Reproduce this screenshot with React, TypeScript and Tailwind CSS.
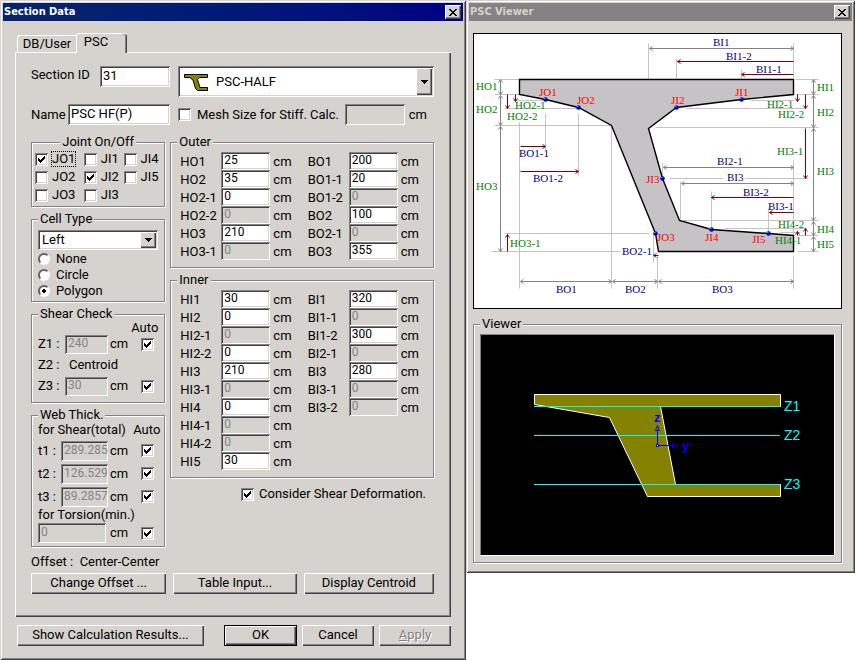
import type { ReactNode } from "react";
import clsx from "clsx";

const SUNKEN =
  "shadow-[inset_1px_1px_0_#848284,inset_-1px_-1px_0_#fff,inset_2px_2px_0_#424142,inset_-2px_-2px_0_#d6d3ce]";
const RAISED =
  "shadow-[inset_1px_1px_0_#fff,inset_-1px_-1px_0_#424142,inset_-2px_-2px_0_#848284]";
const WINDOW =
  "min-w-0 bg-[#d6d3ce] p-[3px] shadow-[inset_1px_1px_0_#d6d3ce,inset_-1px_-1px_0_#424142,inset_2px_2px_0_#fff,inset_-2px_-2px_0_#848284]";

type FieldData = { name: string; value: string; off?: boolean };

const OUTER: FieldData[][] = [
  [
    { name: "HO1", value: "25" },
    { name: "HO2", value: "35" },
    { name: "HO2-1", value: "0" },
    { name: "HO2-2", value: "0", off: true },
    { name: "HO3", value: "210" },
    { name: "HO3-1", value: "0", off: true },
  ],
  [
    { name: "BO1", value: "200" },
    { name: "BO1-1", value: "20" },
    { name: "BO1-2", value: "0", off: true },
    { name: "BO2", value: "100" },
    { name: "BO2-1", value: "0", off: true },
    { name: "BO3", value: "355" },
  ],
];

const INNER: FieldData[][] = [
  [
    { name: "HI1", value: "30" },
    { name: "HI2", value: "0" },
    { name: "HI2-1", value: "0", off: true },
    { name: "HI2-2", value: "0" },
    { name: "HI3", value: "210" },
    { name: "HI3-1", value: "0", off: true },
    { name: "HI4", value: "0" },
    { name: "HI4-1", value: "0", off: true },
    { name: "HI4-2", value: "0", off: true },
    { name: "HI5", value: "30" },
  ],
  [
    { name: "BI1", value: "320" },
    { name: "BI1-1", value: "0", off: true },
    { name: "BI1-2", value: "300" },
    { name: "BI2-1", value: "0", off: true },
    { name: "BI3", value: "280" },
    { name: "BI3-1", value: "0", off: true },
    { name: "BI3-2", value: "0", off: true },
  ],
];

const JOINTS = [
  { name: "JO1", on: true },
  { name: "JI1" },
  { name: "JI4" },
  { name: "JO2" },
  { name: "JI2", on: true },
  { name: "JI5" },
  { name: "JO3" },
  { name: "JI3" },
];

function TitleBar({ title, active }: { title: string; active?: boolean }) {
  return (
    <header
      className={clsx(
        "flex h-[18px] items-center justify-between pr-[2px] pl-px",
        active ? "bg-linear-to-r from-[#08246b] to-[#000084] text-white" : "bg-[#848284] text-[#d6d3ce]",
      )}
    >
      <h1 className="font-['DejaVu_Sans_Condensed','DejaVu_Sans',sans-serif] text-[11px] leading-4 font-bold">
        {title}
      </h1>
      <button aria-label="Close" className={clsx("flex h-[14px] w-4 items-center justify-center bg-[#d6d3ce]", RAISED)}>
        <svg width="8" height="7" viewBox="0 0 8 7" shapeRendering="crispEdges">
          <path
            d="M0 0h2v1h-2zM6 0h2v1h-2zM1 1h2v1h-2zM5 1h2v1h-2zM2 2h4v1h-4zM3 3h2v1h-2zM2 4h4v1h-4zM1 5h2v1h-2zM5 5h2v1h-2zM0 6h2v1h-2zM6 6h2v1h-2z"
            fill="#000"
          />
        </svg>
      </button>
    </header>
  );
}

function Group({ title, center, className, children }: { title: string; center?: boolean; className?: string; children: ReactNode }) {
  return (
    <fieldset
      className={clsx(
        "min-w-0 border border-[#848284] shadow-[1px_1px_0_#fff,inset_1px_1px_0_#fff]",
        className,
      )}
    >
      <legend className={clsx("h-4 bg-[#d6d3ce] px-[2px] leading-4", center ? "mx-auto" : "ml-[6px]")}>{title}</legend>
      {children}
    </fieldset>
  );
}

function TextBox({ id, label, value, off, className }: { id?: string; label?: string; value: string; off?: boolean; className?: string }) {
  return (
    <input
      id={id}
      aria-label={label}
      type="text"
      defaultValue={value}
      disabled={off}
      className={clsx(
        "min-w-0 pb-[2px] pl-[3px] outline-none",
        off ? "bg-[#d6d3ce] text-[#848284]" : "bg-white",
        SUNKEN,
        className,
      )}
    />
  );
}

function Tick({ id, label, checked }: { id?: string; label?: string; checked?: boolean }) {
  return (
    <span className="relative block size-[13px] shrink-0">
      <input
        id={id}
        aria-label={label}
        type="checkbox"
        defaultChecked={checked}
        className={clsx("peer block size-[13px] appearance-none bg-white outline-none", SUNKEN)}
      />
      <svg
        className="pointer-events-none absolute top-[3px] left-[3px] hidden peer-checked:block"
        width="7"
        height="7"
        viewBox="0 0 7 7"
        shapeRendering="crispEdges"
      >
        <path d="M0 2h1v3h-1zM1 3h1v3h-1zM2 4h1v3h-1zM3 3h1v3h-1zM4 2h1v3h-1zM5 1h1v3h-1zM6 0h1v3h-1z" />
      </svg>
    </span>
  );
}

function DropArrow() {
  return (
    <span
      className={clsx(
        "pointer-events-none absolute inset-y-[2px] right-[2px] flex w-4 items-center justify-center bg-[#d6d3ce]",
        RAISED,
      )}
    >
      <svg width="7" height="4" viewBox="0 0 7 4" shapeRendering="crispEdges">
        <path d="M0 0h7v1h-7zM1 1h5v1h-5zM2 2h3v1h-3zM3 3h1v1h-1z" />
      </svg>
    </span>
  );
}

function PushButton({ children, className, disabled }: { children: ReactNode; className?: string; disabled?: boolean }) {
  return (
    <button
      disabled={disabled}
      className={clsx(
        "h-[21px] pb-[2px] text-center leading-4 whitespace-nowrap",
        disabled && "text-[#848284] [text-shadow:1px_1px_0_#fff]",
        RAISED,
        className,
      )}
    >
      {children}
    </button>
  );
}

function FieldColumn({ fields }: { fields: FieldData[] }) {
  return (
    <div>
      {fields.map((f) => (
        <div key={f.name} className="flex h-[18px] items-center">
          <label htmlFor={f.name} className="w-[41px] pt-px leading-4">
            {f.name}
          </label>
          <TextBox id={f.name} value={f.value} off={f.off} className="h-[18px] w-[49px] text-xs" />
          <span className="ml-[3px] pt-[2px] leading-4">cm</span>
        </div>
      ))}
    </div>
  );
}

function DimensionGroup({ title, columns }: { title: string; columns: FieldData[][] }) {
  return (
    <Group title={title}>
      <div className="grid grid-cols-[127fr_125fr] pt-[2px] pb-[7px] pl-[9px]">
        {columns.map((fields) => (
          <FieldColumn key={fields[0].name} fields={fields} />
        ))}
      </div>
    </Group>
  );
}

function AutoRow({ label, children, className }: { label: string; children: ReactNode; className: string }) {
  return (
    <div className={clsx("flex items-center pr-[10px] pl-[6px]", className)}>
      {children}
      <span className="ml-[2px] flex-1 leading-4">cm</span>
      <Tick label={`${label} auto`} checked />
    </div>
  );
}

function JointGroup() {
  return (
    <Group title="Joint On/Off" center>
      <div className="grid grid-cols-[49fr_40fr_41fr] pb-[2px] pl-[3px]">
        {JOINTS.map((j) => (
          <div key={j.name} className="flex h-[18px] items-center gap-1">
            <Tick id={j.name} checked={j.on} />
            <label
              htmlFor={j.name}
              className={clsx("leading-[14px]", j.name === "JO1" && "outline-1 outline-black outline-dotted")}
            >
              {j.name}
            </label>
          </div>
        ))}
      </div>
    </Group>
  );
}

function CellTypeGroup() {
  return (
    <Group title="Cell Type">
      <div className="px-[6px] pt-[3px] pb-[2px]">
        <div className="relative mb-px">
          <select aria-label="Cell type side" className={clsx("block h-5 w-full appearance-none bg-white pb-px pl-1 outline-none", SUNKEN)}>
            <option>Left</option>
            <option>Right</option>
          </select>
          <DropArrow />
        </div>
        {["None", "Circle", "Polygon"].map((t) => (
          <label key={t} className="flex h-4 items-center gap-[6px] leading-4">
            <input
              type="radio"
              name="cell-type"
              defaultChecked={t === "Polygon"}
              className="size-3 appearance-none rounded-full border-2 border-t-[#636163] border-r-white border-b-white border-l-[#636163] bg-white checked:bg-[radial-gradient(circle,#000_2px,#fff_2px)]"
            />
            {t}
          </label>
        ))}
      </div>
    </Group>
  );
}

function ShearCheckGroup() {
  return (
    <Group title="Shear Check">
      <div className="h-3 pr-[6px] text-right leading-3">Auto</div>
      <div className="flex flex-col gap-px pb-[6px]">
        <AutoRow label="Z1" className="h-5">
          <label htmlFor="z1" className="w-[27px]">Z1 :</label>
          <TextBox id="z1" value="240" off className="h-[19px] w-[43px] text-xs" />
        </AutoRow>
        <div className="flex h-5 items-center pl-[6px]">
          <span className="w-[31px]">Z2 :</span>
          <span>Centroid</span>
        </div>
        <AutoRow label="Z3" className="h-5">
          <label htmlFor="z3" className="w-[27px]">Z3 :</label>
          <TextBox id="z3" value="30" off className="h-[19px] w-[43px] text-xs" />
        </AutoRow>
      </div>
    </Group>
  );
}

function WebThickGroup() {
  const rows = [
    ["t1", "289.285"],
    ["t2", "126.529"],
    ["t3", "89.2857"],
  ];
  return (
    <Group title="Web Thick.">
      <div className="flex h-4 justify-between pr-1 pl-[6px] leading-[14px] whitespace-nowrap">
        <span>for Shear(total)</span>
        <span>Auto</span>
      </div>
      {rows.map(([name, value]) => (
        <AutoRow key={name} label={name} className="h-[23px]">
          <label htmlFor={name} className="w-[23px]">{name} :</label>
          <TextBox id={name} value={value} off className="h-5 w-[47px] text-xs" />
        </AutoRow>
      ))}
      <label htmlFor="torsion" className="block h-[14px] pl-[6px] leading-[14px]">
        for Torsion(min.)
      </label>
      <AutoRow label="Torsion" className="mb-[2px] h-[22px]">
        <TextBox id="torsion" value="0" off className="mr-[2px] h-5 w-[68px] text-xs" />
      </AutoRow>
    </Group>
  );
}

function PscForm() {
  return (
    <div className="border-t border-l border-white pt-[13px] pr-[17px] pb-[23px] pl-[15px] shadow-[inset_-1px_-1px_0_#424142,inset_-2px_-2px_0_#848284]">
      <div className="grid grid-cols-[minmax(0,139fr)_minmax(0,256fr)] gap-x-2 gap-y-[7px]">
        <div className="flex items-start">
          <label htmlFor="section-id" className="w-[69px] leading-[18px]">Section ID</label>
          <TextBox id="section-id" value="31" className="h-[21px] w-0 flex-1" />
        </div>
        <div className={clsx("relative flex h-[31px] items-center bg-white pl-[6px]", SUNKEN)}>
          <svg width="25" height="18" viewBox="0 0 25 18">
            <path d="M.5 1.5H23.5V4.5H15.5L13.5 6.5L16 14.5H23.5V17.5H13.5L11.5 15.5L9 7L5.5 4.5H.5Z" fill="#848200" stroke="#000" />
          </svg>
          <select aria-label="Section shape" className="h-full flex-1 appearance-none bg-transparent pl-[7px] outline-none">
            <option>PSC-HALF</option>
          </select>
          <DropArrow />
        </div>
        <div className="flex items-center">
          <label htmlFor="name" className="w-[37px]">Name</label>
          <TextBox id="name" value="PSC HF(P)" className="h-[21px] w-0 flex-1" />
        </div>
        <div className="flex items-center">
          <Tick id="mesh" />
          <label htmlFor="mesh" className="ml-[6px] flex-1 whitespace-nowrap">Mesh Size for Stiff. Calc.</label>
          <TextBox label="Mesh size" value="" off className="h-[21px] w-[60px]" />
          <span className="mr-[7px] ml-1">cm</span>
        </div>
      </div>

      <div className="mt-[9px] grid grid-cols-[minmax(0,134fr)_minmax(0,263fr)] gap-x-[5px]">
        <div className="flex flex-col gap-1">
          <JointGroup />
          <CellTypeGroup />
          <ShearCheckGroup />
          <WebThickGroup />
        </div>
        <div className="flex flex-col gap-1">
          <DimensionGroup title="Outer" columns={OUTER} />
          <DimensionGroup title="Inner" columns={INNER} />
          <div className="mt-1 flex items-center justify-end gap-[5px] pr-2 leading-4">
            <Tick id="shear-deformation" checked />
            <label htmlFor="shear-deformation">Consider Shear Deformation.</label>
          </div>
        </div>
      </div>

      <p className="mt-[7px] leading-4">Offset :&nbsp; Center-Center</p>
      <div className="mt-[3px] grid grid-cols-[135fr_123fr_130fr] gap-[7px]">
        <PushButton>Change Offset ...</PushButton>
        <PushButton>Table Input...</PushButton>
        <PushButton>Display Centroid</PushButton>
      </div>
    </div>
  );
}

function SectionDataDialog() {
  return (
    <section className={WINDOW}>
      <TitleBar title="Section Data" active />
      <div className="px-3 pt-3 pb-[11px]">
        <div role="tablist" className="flex items-end pl-[2px]">
          <button
            role="tab"
            aria-selected="false"
            className="h-[17px] w-[59px] rounded-tl-[3px] border-t border-l border-white leading-4"
          >
            DB/User
          </button>
          <button
            role="tab"
            aria-selected="true"
            className="-mb-px h-5 w-[51px] rounded-t-[3px] border-t border-l border-white bg-[#d6d3ce] pr-3 pb-[3px] leading-4 shadow-[inset_-1px_0_0_#424142,inset_-2px_0_0_#848284]"
          >
            PSC
          </button>
        </div>
        <PscForm />
        <div className="mt-2 grid grid-cols-[202fr_73fr_72fr_72fr] gap-x-[5px] pl-[2px]">
          <PushButton className="mr-[15px]">Show Calculation Results...</PushButton>
          <PushButton className="border border-black">OK</PushButton>
          <PushButton>Cancel</PushButton>
          <PushButton disabled>
            <u>A</u>pply
          </PushButton>
        </div>
      </div>
    </section>
  );
}

type Seg = [number, number, number, number];

// light construction lines
const GUIDES: Seg[] = [
  [494, 79, 519, 79], [494, 94, 519, 94], [494, 125, 611, 125],
  [513, 100, 545, 100], [504, 108, 576, 108],
  [519, 122, 519, 288], [545, 113, 545, 150], [578, 113, 578, 176], [611, 127, 611, 288],
  [504, 233, 649, 233], [491, 251, 620, 251], [657, 254, 657, 288], [653, 235, 653, 262],
  [648, 43, 648, 126], [793, 43, 793, 77], [676, 58, 676, 79], [741, 69, 741, 79],
  [795, 79, 818, 79], [795, 94, 818, 94], [751, 100, 794, 100], [685, 108, 806, 108],
  [655, 127, 818, 127], [662, 163, 662, 177], [680, 181, 680, 219], [711, 191, 711, 228],
  [768, 208, 768, 232], [793, 160, 793, 234], [793, 255, 793, 288],
  [669, 178, 723, 178], [745, 178, 808, 178],
  [683, 220, 818, 220], [725, 228, 806, 228], [780, 232, 800, 232],
  [797, 235, 818, 235], [797, 251, 818, 251],
];

// double-headed dimensions
const SPANS: Seg[] = [
  [500, 79, 500, 94], [500, 95, 500, 125], [500, 126, 500, 251],
  [813, 79, 813, 94], [813, 95, 813, 127], [813, 128, 813, 220], [813, 221, 813, 235], [813, 236, 813, 251],
  [649, 48, 793, 48], [663, 167, 793, 167], [681, 183, 793, 183],
  [520, 281, 611, 281], [612, 281, 657, 281], [658, 281, 793, 281],
];

// single-headed offsets, the head is at the second point
const OFFSETS: Seg[] = [
  [507, 94, 507, 108], [515, 94, 515, 101], [520, 146, 545, 146], [520, 171, 578, 171],
  [507, 251, 507, 234], [658, 255, 653, 255],
  [793, 61, 677, 61], [793, 74, 741, 74], [797, 94, 797, 101], [805, 94, 805, 108],
  [805, 128, 805, 178], [793, 197, 711, 197], [793, 212, 769, 212],
  [797, 235, 797, 231], [805, 235, 805, 228],
];

const DOTS = [
  [545, 99], [578, 107], [655, 233], [741, 99], [676, 107], [662, 178], [711, 229], [768, 233],
];

type Mark = [string, number, number];

const GREEN_MARKS: Mark[] = [
  ["HO1", 476, 90], ["HO2", 476, 113], ["HO2-1", 515, 109], ["HO2-2", 507, 120],
  ["HO3", 476, 190], ["HO3-1", 510, 247],
  ["HI1", 817, 91], ["HI2", 817, 116], ["HI2-1", 767, 108], ["HI2-2", 778, 118],
  ["HI3-1", 777, 155], ["HI3", 817, 175], ["HI4-2", 778, 228], ["HI4-1", 775, 244],
  ["HI4", 817, 233], ["HI5", 817, 248],
];
const BLUE_MARKS: Mark[] = [
  ["BI1", 713, 46], ["BI1-2", 726, 60], ["BI1-1", 756, 73], ["BO1-1", 519, 157], ["BO1-2", 533, 182],
  ["BI2-1", 717, 165], ["BI3", 727, 181], ["BI3-2", 743, 196], ["BI3-1", 768, 210],
  ["BO2-1", 622, 255], ["BO1", 556, 293], ["BO2", 625, 293], ["BO3", 712, 293],
];
const RED_MARKS: Mark[] = [
  ["JO1", 539, 96], ["JO2", 577, 104], ["JI1", 735, 96], ["JI2", 671, 104],
  ["JI3", 646, 183], ["JO3", 657, 241], ["JI4", 705, 241], ["JI5", 752, 243],
];

function Marks({ items, fill }: { items: Mark[]; fill: string }) {
  return (
    <g fill={fill}>
      {items.map(([text, x, y]) => (
        <text key={text} x={x} y={y}>
          {text}
        </text>
      ))}
    </g>
  );
}

function head([x1, y1, x2, y2]: Seg) {
  const dx = Math.sign(x2 - x1);
  const dy = Math.sign(y2 - y1);
  const bx = x2 - dx * 3;
  const by = y2 - dy * 3;
  return `M${bx - dy * 2} ${by - dx * 2}L${x2} ${y2}L${bx + dy * 2} ${by + dx * 2}`;
}

function SectionDiagram() {
  return (
    <svg
      role="img"
      aria-label="Section dimensions"
      viewBox="473 33 369 276"
      className="block h-auto w-full bg-white font-['Liberation_Serif',serif] text-[11px]"
    >
      <g transform="translate(.5 .5)" fill="none">
        {GUIDES.map(([x1, y1, x2, y2], i) => (
          <line key={i} x1={x1} y1={y1} x2={x2} y2={y2} stroke="#c6c3c6" />
        ))}
        <path
          d="M519 79H793V94L741 99L676 107L648 128L662 178L679 220L711 229L768 233L793 235V251H658L655 233L611 125L578 107L545 99L519 94Z"
          fill="#c6c3c6"
          stroke="#000"
          strokeWidth="1.4"
        />
        <g stroke="#848284">
          {SPANS.map((s, i) => (
            <path key={i} d={`M${s[0]} ${s[1]}L${s[2]} ${s[3]}${head(s)}${head([s[2], s[3], s[0], s[1]])}`} />
          ))}
        </g>
        <g stroke="#840000">
          {OFFSETS.map((s, i) => (
            <path key={i} d={`M${s[0]} ${s[1]}L${s[2]} ${s[3]}${head(s)}`} />
          ))}
        </g>
        {DOTS.map(([x, y]) => (
          <g key={x}>
            <circle cx={x} cy={y} r="2.3" fill="#0000c6" />
            <path d={`M${x - 2} ${y - 1}h2`} stroke="#00c3ff" />
          </g>
        ))}
      </g>
      <Marks items={GREEN_MARKS} fill="#008200" />
      <Marks items={BLUE_MARKS} fill="#000084" />
      <Marks items={RED_MARKS} fill="#ff0000" />
      <rect x="473.5" y="33.5" width="368" height="275" fill="none" stroke="#000" />
    </svg>
  );
}

function SectionPreview() {
  return (
    <svg
      role="img"
      aria-label="Section preview"
      viewBox="480 334 355 222"
      className="block h-auto w-full bg-black font-['Liberation_Sans',sans-serif] text-[14px]"
    >
      <path
        d="M534.5 394.5H780.5V406.5H660.5L675.5 484.5H780.5V496.5H647.5L609.5 417.5L534.5 404.5Z"
        fill="#848200"
        stroke="#fff"
      />
      <path d="M534 406.5H781M534 435.5H780M534 484.5H781" stroke="#00ffff" />
      <g fill="#00ffff">
        <text x="784" y="411">Z1</text>
        <text x="784" y="440">Z2</text>
        <text x="784" y="489">Z3</text>
      </g>
      <g fill="none" stroke="#0000ff">
        <path d="M657.5 445V430M658 445.5H672M655.5 430.5h4l-2-5zM672.5 443.5v4l5-2z" />
        <rect x="656.5" y="444.5" width="2" height="2" fill="#fff" />
      </g>
      <g fill="#0000ff" className="text-[13px] font-bold">
        <text x="654" y="422">z</text>
        <text x="682" y="450">y</text>
      </g>
      <path d="M480.5 556V334.5H835" fill="none" stroke="#848284" />
      <path d="M480 555.5H834.5V334" fill="none" stroke="#fff" />
    </svg>
  );
}

function ViewerWindow() {
  return (
    <section className={WINDOW}>
      <TitleBar title="PSC Viewer" />
      <div className="pt-3 pr-[10px] pb-[7px] pl-1">
        <SectionDiagram />
        <Group title="Viewer" className="mt-[7px]">
          <div className="px-[6px] pt-[2px] pb-[6px]">
            <SectionPreview />
          </div>
        </Group>
      </div>
    </section>
  );
}

export default function App() {
  return (
    <main className="grid min-h-screen grid-cols-[minmax(0,466fr)_minmax(0,389fr)] items-start bg-white font-[Roboto,sans-serif] text-[13px] leading-4 text-black">
      <SectionDataDialog />
      <ViewerWindow />
    </main>
  );
}
